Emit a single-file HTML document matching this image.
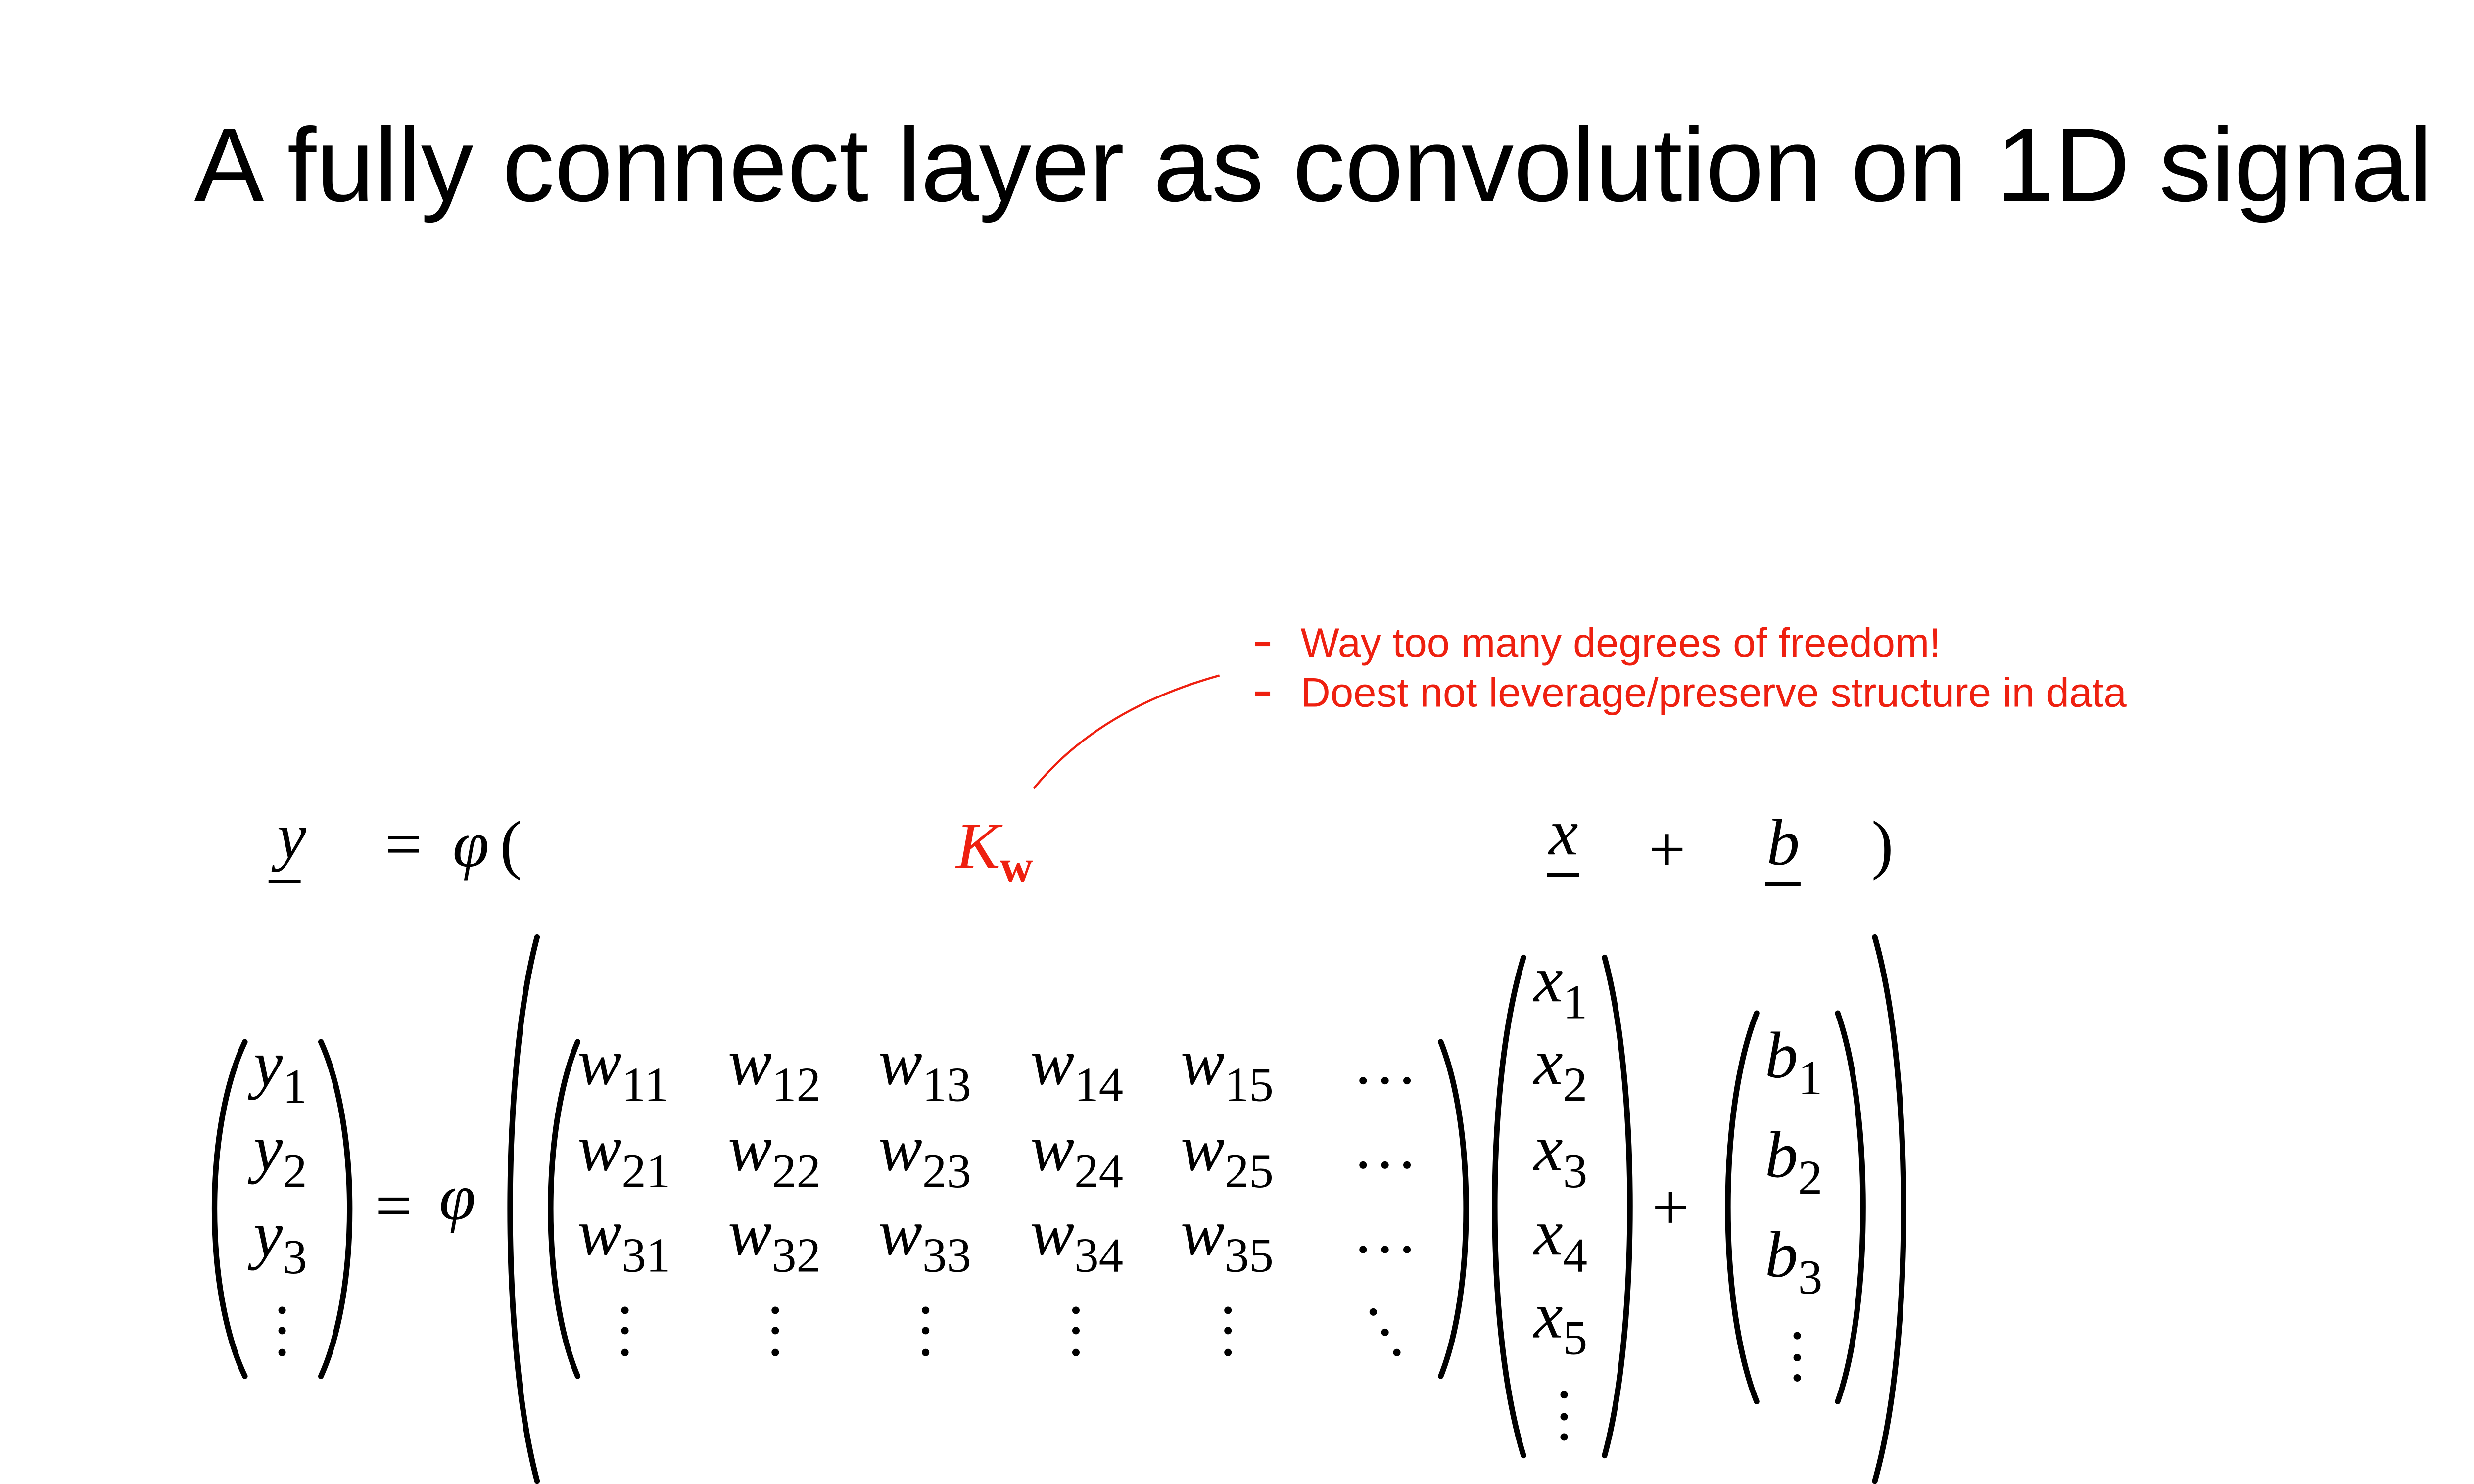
<!DOCTYPE html>
<html><head><meta charset="utf-8"><style>
html,body{margin:0;padding:0;background:#fff;width:5334px;height:3000px;overflow:hidden;}
#w{position:absolute;left:0;top:0;width:5334px;height:3000px;overflow:hidden;}
svg{display:block;position:absolute;left:0;top:0;}
</style></head><body><div id="w">
<svg width="5334" height="3000" xmlns="http://www.w3.org/2000/svg">
<g transform="scale(3.4136)">
<text x="115" y="119" font-family="Liberation Sans, sans-serif" font-size="62" textLength="1325" lengthAdjust="spacingAndGlyphs" fill="#000">A fully connect layer as convolution on 1D signal</text>

<g fill="#ee2010" font-family="Liberation Sans, sans-serif" font-size="24.5">
<rect x="743" y="380" width="9" height="2.6"/>
<rect x="743" y="409.5" width="9" height="2.6"/>
<text x="770" y="389" textLength="379" lengthAdjust="spacingAndGlyphs">Way too many degrees of freedom!</text>
<text x="770" y="418.4" textLength="489" lengthAdjust="spacingAndGlyphs">Doest not leverage/preserve structure in data</text>
</g>
<path d="M612 467 Q650 420 722 400" fill="none" stroke="#ee2010" stroke-width="1.3"/>

<g font-family="Liberation Serif, serif" font-size="39" font-style="italic" fill="#000">
<text x="164" y="508">y</text>
<rect x="159" y="521" width="19" height="2.2"/>
<text x="228" y="513" font-style="normal">=</text>
<text x="268" y="513">φ</text>
<text x="296" y="513" font-style="normal">(</text>
<text x="566" y="514" fill="#ee2010">K<tspan font-size="27" font-style="normal" font-weight="bold" dy="8">w</tspan></text>
<text x="917" y="506">x</text>
<rect x="916" y="517" width="19" height="2.2"/>
<text x="976" y="516" font-style="normal">+</text>
<text x="1046" y="512">b</text>
<rect x="1045" y="522.5" width="21" height="2.2"/>
<text x="1108" y="513" font-style="normal">)</text>

<text x="150" y="643">y<tspan font-size="29" font-style="normal" dy="10">1</tspan></text>
<text x="150" y="693">y<tspan font-size="29" font-style="normal" dy="10">2</tspan></text>
<text x="150" y="744">y<tspan font-size="29" font-style="normal" dy="10">3</tspan></text>

<text x="222" y="727" font-style="normal">=</text>
<text x="260" y="722">φ</text>

<text x="342" y="642">w<tspan font-size="29" font-style="normal" dy="10">11</tspan></text>
<text x="431" y="642">w<tspan font-size="29" font-style="normal" dy="10">12</tspan></text>
<text x="520" y="642">w<tspan font-size="29" font-style="normal" dy="10">13</tspan></text>
<text x="610" y="642">w<tspan font-size="29" font-style="normal" dy="10">14</tspan></text>
<text x="699" y="642">w<tspan font-size="29" font-style="normal" dy="10">15</tspan></text>
<text x="342" y="693">w<tspan font-size="29" font-style="normal" dy="10">21</tspan></text>
<text x="431" y="693">w<tspan font-size="29" font-style="normal" dy="10">22</tspan></text>
<text x="520" y="693">w<tspan font-size="29" font-style="normal" dy="10">23</tspan></text>
<text x="610" y="693">w<tspan font-size="29" font-style="normal" dy="10">24</tspan></text>
<text x="699" y="693">w<tspan font-size="29" font-style="normal" dy="10">25</tspan></text>
<text x="342" y="743">w<tspan font-size="29" font-style="normal" dy="10">31</tspan></text>
<text x="431" y="743">w<tspan font-size="29" font-style="normal" dy="10">32</tspan></text>
<text x="520" y="743">w<tspan font-size="29" font-style="normal" dy="10">33</tspan></text>
<text x="610" y="743">w<tspan font-size="29" font-style="normal" dy="10">34</tspan></text>
<text x="699" y="743">w<tspan font-size="29" font-style="normal" dy="10">35</tspan></text>

<text x="908" y="593">x<tspan font-size="29" font-style="normal" dy="10">1</tspan></text>
<text x="908" y="642">x<tspan font-size="29" font-style="normal" dy="10">2</tspan></text>
<text x="908" y="693">x<tspan font-size="29" font-style="normal" dy="10">3</tspan></text>
<text x="908" y="743">x<tspan font-size="29" font-style="normal" dy="10">4</tspan></text>
<text x="908" y="792">x<tspan font-size="29" font-style="normal" dy="10">5</tspan></text>

<text x="978" y="728" font-style="normal">+</text>

<text x="1045" y="638">b<tspan font-size="29" font-style="normal" dy="10">1</tspan></text>
<text x="1045" y="697">b<tspan font-size="29" font-style="normal" dy="10">2</tspan></text>
<text x="1045" y="756">b<tspan font-size="29" font-style="normal" dy="10">3</tspan></text>
</g>

<g fill="#000">
<circle cx="167" cy="776" r="2.2"/><circle cx="167" cy="788" r="2.2"/><circle cx="167" cy="801" r="2.2"/>
<circle cx="370" cy="776" r="2.2"/><circle cx="370" cy="788" r="2.2"/><circle cx="370" cy="801" r="2.2"/>
<circle cx="459" cy="776" r="2.2"/><circle cx="459" cy="788" r="2.2"/><circle cx="459" cy="801" r="2.2"/>
<circle cx="548" cy="776" r="2.2"/><circle cx="548" cy="788" r="2.2"/><circle cx="548" cy="801" r="2.2"/>
<circle cx="637" cy="776" r="2.2"/><circle cx="637" cy="788" r="2.2"/><circle cx="637" cy="801" r="2.2"/>
<circle cx="727" cy="776" r="2.2"/><circle cx="727" cy="788" r="2.2"/><circle cx="727" cy="801" r="2.2"/>
<circle cx="813" cy="777" r="2.2"/><circle cx="820" cy="789" r="2.2"/><circle cx="827" cy="801" r="2.2"/>
<circle cx="926" cy="826" r="2.2"/><circle cx="926" cy="839" r="2.2"/><circle cx="926" cy="851" r="2.2"/>
<circle cx="1064" cy="791" r="2.2"/><circle cx="1064" cy="804" r="2.2"/><circle cx="1064" cy="816" r="2.2"/>
<circle cx="807" cy="640" r="2.2"/><circle cx="820" cy="640" r="2.2"/><circle cx="833" cy="640" r="2.2"/>
<circle cx="807" cy="690" r="2.2"/><circle cx="820" cy="690" r="2.2"/><circle cx="833" cy="690" r="2.2"/>
<circle cx="807" cy="740" r="2.2"/><circle cx="820" cy="740" r="2.2"/><circle cx="833" cy="740" r="2.2"/>
</g>

<g fill="none" stroke="#000" stroke-width="3.3" stroke-linecap="round">
<path d="M318 555 C296.7 635,296.7 797,318 877"/>
<path d="M1110 555 C1132.7 635,1132.7 797,1110 877"/>
<path d="M145 617 C121 667,121 765,145 815"/>
<path d="M190 617 C212.7 667,212.7 765,190 815"/>
<path d="M342 617 C320.7 667,320.7 765,342 815"/>
<path d="M853 617 C873 667,873 765,853 815"/>
<path d="M902 567 C879.3 641,879.3 788,902 862"/>
<path d="M950 567 C970 641,970 788,950 862"/>
<path d="M1040 600 C1017.3 657,1017.3 773,1040 830"/>
<path d="M1088 600 C1108 657,1108 773,1088 830"/>
</g>

<text x="1531" y="863" font-family="Liberation Sans, sans-serif" font-size="16" fill="#222">3</text>
</g>
</svg>
</div></body></html>
